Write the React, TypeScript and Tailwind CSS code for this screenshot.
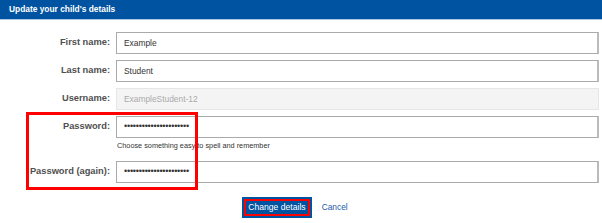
const dots = '••••••••••••••••••••••';

function Row({ label, children }: { label: string; children: React.ReactNode }) {
  return (
    <div className="flex items-center">
      <div className="w-[111px] pr-[1px] text-right text-[9.3px] font-bold text-[#4f4f4f]">{label}</div>
      <div className="ml-[5px] flex-1">{children}</div>
    </div>
  );
}

function Field({ value, disabled, secret }: { value: string; disabled?: boolean; secret?: boolean }) {
  return (
    <div
      className={`flex h-[22px] items-center pl-[7px] ${
        disabled
          ? 'border border-[#e6e6e6] bg-[#f4f4f4] text-[#aaa]'
          : 'border border-[#aaa] border-r-2 border-r-[#bbb] bg-white text-[#333]'
      } ${secret ? 'text-[9px] tracking-[-0.2px]' : 'text-[8.4px]'}`}
    >
      {value}
    </div>
  );
}

export default function App() {
  return (
    <div className="h-[223px] w-[602px] bg-white" style={{ fontFamily: '"Liberation Sans", Arial, sans-serif' }}>
      <div className="flex h-[20px] items-center border-b border-[#a9c6e3] bg-[#0053a1] pl-[9px] text-[8.4px] font-bold text-white">
        Update your child's details
      </div>

      <div className="flex flex-col gap-[6px] pr-[3px] pt-[12px]">
        <Row label="First name:">
          <Field value="Example" />
        </Row>
        <Row label="Last name:">
          <Field value="Student" />
        </Row>
        <Row label="Username:">
          <Field value="ExampleStudent-12" disabled />
        </Row>

        <div className="relative flex flex-col">
          <Row label="Password:">
            <Field value={dots} secret />
          </Row>
          <div className="ml-[117px] mt-[3px] text-[7.3px] leading-[10px] text-[#333]">
            Choose something easy to spell and remember
          </div>
          <div className="mt-[10px]">
            <Row label="Password (again):">
              <Field value={dots} secret />
            </Row>
          </div>
          <div className="pointer-events-none absolute left-[26px] top-[-4px] h-[78px] w-[172px] border-[3px] border-[#f00]" />
        </div>
      </div>

      <div className="mt-[14px] flex items-center justify-center gap-[10px] pr-[12px]">
        <button className="bg-[#0053a1] p-[2px]">
          <span className="block border-2 border-[#f00] px-[2px] py-[2px] text-[8.6px] leading-[9px] text-white">
            Change details
          </span>
        </button>
        <span className="text-[8.4px] text-[#1a5aa8]">Cancel</span>
      </div>
    </div>
  );
}
